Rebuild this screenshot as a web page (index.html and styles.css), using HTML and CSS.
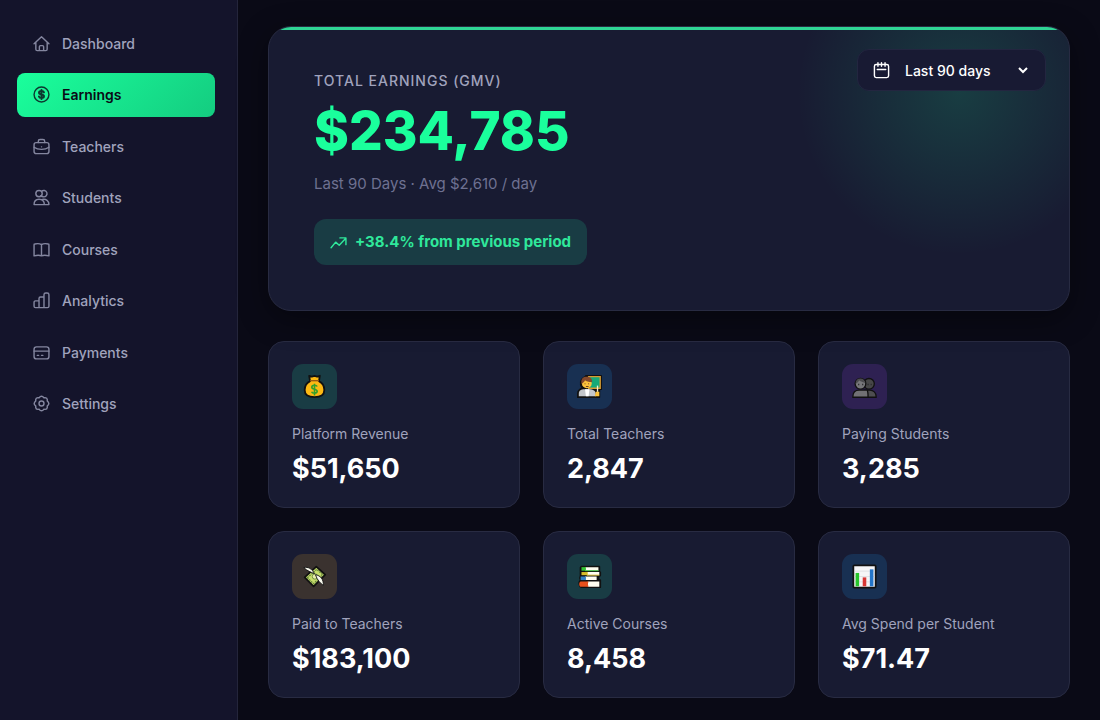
FILE: index.html
```html
<!DOCTYPE html>
<html lang="en">
<head>
    <meta charset="UTF-8">
    <meta name="viewport" content="width=device-width, initial-scale=1.0">
    <title>Earnings</title>
    <link rel="stylesheet" href="styles.css">
</head>
<body>
    <div class="layout">
        <!-- Sidebar -->
        <aside class="sidebar">
            <nav class="nav">
                <a href="#" class="nav-item">
                    <svg class="icon" viewBox="0 0 24 24"><path d="M1.500 12.500 12 2.500l10.500 10M4 10.500V20a2 2 0 0 0 2 2h12a2 2 0 0 0 2-2v-9.500M9 22v-5.500a1.500 1.500 0 0 1 1.500-1.500h3a1.500 1.500 0 0 1 1.500 1.500V22"/></svg>
                    Dashboard
                </a>
                <a href="#" class="nav-item active">
                    <svg class="icon" viewBox="0 0 24 24"><circle cx="12" cy="12" r="10.500"/><path stroke-width="2.800" d="M15.500 9c-.4-1.300-1.800-2-3.500-2-2 0-3.500.9-3.500 2.500 0 3.600 7 1.500 7 5 0 1.600-1.500 2.500-3.500 2.500-1.800 0-3.200-.8-3.600-2.200M12 5.500v13"/></svg>
                    Earnings
                </a>
                <a href="#" class="nav-item">
                    <svg class="icon" viewBox="0 0 24 24"><rect x="1.500" y="6.500" width="21" height="15.500" rx="3"/><path d="M7.500 6.500V4.500a2.500 2.500 0 0 1 2.500-2.500h4a2.500 2.500 0 0 1 2.500 2.500v2M1.500 13c3 2.200 6.500 3 10.500 3s7.500-.8 10.500-3M12 12.500h.1"/></svg>
                    Teachers
                </a>
                <a href="#" class="nav-item">
                    <svg class="icon" viewBox="0 0 24 24"><circle cx="8.500" cy="6.500" r="4.500"/><path d="M12 3.500a4.500 4.500 0 1 1 2.500 7.500c-1.500 0-2.700-.5-3.500-1.500M1.500 22c0-5 2.500-7.500 7-7.500s7.500 2.500 7.500 7.500zM13 14.800c5.500-1 9.500 1.700 9.500 7.200H16"/></svg>
                    Students
                </a>
                <a href="#" class="nav-item">
                    <svg class="icon" viewBox="0 0 24 24"><path d="M12 5C9.500 3.500 5.500 3.500 2.500 4.200a1 1 0 0 0-1 1V21c4-1 8-1 10.500 0 2.500-1 6.500-1 10.500 0V5.200a1 1 0 0 0-1-1C18.500 3.500 14.500 3.500 12 5zM12 5v16"/></svg>
                    Courses
                </a>
                <a href="#" class="nav-item">
                    <svg class="icon" viewBox="0 0 24 24"><path d="M8.500 22H3.500a2 2 0 0 1-2-2v-5.500a2 2 0 0 1 2-2h5zM8.500 22V9a2 2 0 0 1 2-2h5v15zM15.500 22V4a2.500 2.500 0 0 1 2.500-2.500h2A2.500 2.500 0 0 1 22.500 4V20a2 2 0 0 1-2 2z"/></svg>
                    Analytics
                </a>
                <a href="#" class="nav-item">
                    <svg class="icon" viewBox="0 0 24 24"><rect x="1.500" y="4" width="21" height="17" rx="3.500"/><path d="M1.500 10h21M6 16h2M12 16h2"/></svg>
                    Payments
                </a>
                <a href="#" class="nav-item">
                    <svg class="icon" viewBox="0 0 24 24"><circle cx="12" cy="12" r="3.500"/><path d="M10 2.500q2-1.600 4 0l1.300 1.300 2-.1q2.600.2 2.900 2.900l-.1 1.900L21.500 10q1.600 2 0 4l-1.400 1.500.1 1.900q-.3 2.700-2.900 2.900l-2-.1L14 21.500q-2 1.600-4 0l-1.300-1.300-2 .1q-2.600-.2-2.900-2.900l.1-1.900L2.500 14q-1.600-2 0-4l1.400-1.500-.1-1.900q.3-2.700 2.900-2.900l2 .1z"/></svg>
                    Settings
                </a>
            </nav>
        </aside>

        <!-- Main content -->
        <main class="main">
            <section class="hero">
                <div class="hero-info">
                    <h1 class="hero-title">Total Earnings (GMV)</h1>
                    <div class="hero-amount">$234,785</div>
                    <p class="hero-sub">Last 90 Days · Avg $2,610 / day</p>
                    <div class="trend">
                        <svg class="trend-icon" viewBox="0 0 24 24"><path d="M1.500 19.500 8 11.500l5 4.500 9-9.500M14 5.500H22.500V15"/></svg>
                        +38.4% from previous period
                    </div>
                </div>
                <div class="period">
                    <label for="period" class="period-label" aria-label="Period">
                        <svg class="icon" viewBox="0 0 24 24"><rect x="2" y="3.500" width="20" height="18.500" rx="2.500"/><path d="M7 1v5M17 1v5M12 1v5M6 10.500h12"/></svg>
                    </label>
                    <select id="period" class="period-select">
                        <option>Last 90 days</option>
                        <option>Last 30 days</option>
                        <option>Last 7 days</option>
                    </select>
                    <svg class="chevron" viewBox="0 0 12 12"><path d="M2 4l4 4 4-4"/></svg>
                </div>
            </section>

            <section class="stats">
                <article class="card">
                    <div class="card-icon green">
                        <svg class="emoji" viewBox="0 0 28 28">
                            <path d="M8 2l3 1 3-1 3 1 3-1-1 6c4 2 6 5 6 10 0 6-4 8-11 8S3 24 3 18c0-5 2-8 6-10z" fill="#fdb913" stroke="#111" stroke-width="2" stroke-linejoin="round"/>
                            <path d="M9 7.500h10" stroke="#9a5a10" stroke-width="1.500"/>
                            <path d="M17 14c-1-2-6-2-6 .7 0 3 6 1.600 6 4.600 0 2.700-5.500 2.700-6.200.5M14 11v13" fill="none" stroke="#33a02c" stroke-width="1.800"/>
                        </svg>
                    </div>
                    <h2 class="card-label">Platform Revenue</h2>
                    <p class="card-value">$51,650</p>
                </article>
                <article class="card">
                    <div class="card-icon blue">
                        <svg class="emoji" viewBox="0 0 28 28">
                            <path d="M10 2h17v15h-2v9H1v-4c0-3 2-5 5-6-3-4-3-10 4-13z" fill="#111" stroke="#111" stroke-width="2" stroke-linejoin="round"/>
                            <path d="M13 3h13v13H13z" fill="#16a978" stroke="#d89b32" stroke-width="1.500"/>
                            <path d="M2 25v-3c0-4 3-5 6-5h6c4 0 7 2 7 5v3z" fill="#c3c6ca"/>
                            <path d="M9 17h5l-1 8h-3z" fill="#fff"/>
                            <circle cx="11" cy="10.500" r="5.500" fill="#fcc23b"/>
                            <path d="M5 11c-1-6 2-8 6-8 5 0 6 3 6 6-4 0-7-1-8-2-1 2-2 3-4 4z" fill="#84492b"/>
                            <path d="M9 10.500v1M13 10.500v1M10 14h3" stroke="#5d371e" stroke-width="1"/>
                            <path d="M23 13v7" stroke="#f5efcf" stroke-width="1.500"/>
                            <path d="M21 20h4v5h-5z" fill="#fcc23b"/>
                        </svg>
                    </div>
                    <h2 class="card-label">Total Teachers</h2>
                    <p class="card-value">2,847</p>
                </article>
                <article class="card">
                    <div class="card-icon purple">
                        <svg class="emoji" viewBox="0 0 28 28" stroke="#111" stroke-width="1.500">
                            <circle cx="19" cy="11" r="6" fill="#474748"/>
                            <path d="M14 26v-8h6c4 0 7 3 7 7v1z" fill="#4e4e50"/>
                            <path d="M1 26v-1c0-5 3-7 7-7h9c1 2 1 5 1 8z" fill="#717174"/>
                            <circle cx="9.500" cy="11" r="6" fill="#77777a"/>
                            <path d="M7.500 11v1.500M12 11v1.500M18 11v1.500M21.500 11v1.500" stroke="#29292c" stroke-width="1.300"/>
                            <path d="M4 11c0-4 2-6 5.500-6 3 0 5 2 5.500 5-4-1-6-2-7-3-1 2-2 3-4 4z" fill="#4b4b4e" stroke="none"/>
                        </svg>
                    </div>
                    <h2 class="card-label">Paying Students</h2>
                    <p class="card-value">3,285</p>
                </article>
                <article class="card">
                    <div class="card-icon orange">
                        <svg class="emoji" viewBox="0 0 28 28">
                            <path d="M3 15 16 3l10 9-13 13z" fill="#c7dd6b" stroke="#111" stroke-width="2" stroke-linejoin="round"/>
                            <path d="M6 15.500 16.500 6l6.500 6-10 10z" fill="none" stroke="#62833c" stroke-width="1.300" stroke-dasharray="2 1"/>
                            <circle cx="14.500" cy="14" r="3" fill="#e9efaa" stroke="#62833c"/>
                            <path d="M2 4c5-1 9 1 12 7-4-2-8-3-12-7zM15 12c6 1 9 5 9 12-3-2-7-6-9-12z" fill="#f8f8ed" stroke="#111" stroke-width="1"/>
                        </svg>
                    </div>
                    <h2 class="card-label">Paid to Teachers</h2>
                    <p class="card-value">$183,100</p>
                </article>
                <article class="card">
                    <div class="card-icon green">
                        <svg class="emoji" viewBox="0 0 28 28">
                            <path d="M5 3h20v6h1v4h-2v5h2v8H5c-3-1-3-6-1-8-1-2-1-3 0-5V4z" fill="#111" stroke="#111" stroke-width="2" stroke-linejoin="round"/>
                            <path d="M9 3.500h15v4H9zM11 9h14v3.500H11zM9 14h13v4H9zM12 19.500h13v6H12z" fill="#fffdf0"/>
                            <path d="M5 3.500h5v4H5z" fill="#35c235"/>
                            <path d="M5 9h7v3.500H5z" fill="#d9bd2b"/>
                            <path d="M4 14h6v4H4z" fill="#3481c4"/>
                            <path d="M4 19.500h9l-1 3 1 3H4c-2-1-2-5 0-6z" fill="#e8501c"/>
                            <path d="M9 7.500h15" stroke="#35c235"/>
                            <path d="M11 12.500h14" stroke="#d9bd2b"/>
                        </svg>
                    </div>
                    <h2 class="card-label">Active Courses</h2>
                    <p class="card-value">8,458</p>
                </article>
                <article class="card">
                    <div class="card-icon blue">
                        <svg class="emoji" viewBox="0 0 28 28">
                            <rect x="1.500" y="1.500" width="25" height="25" rx="1" fill="#f5f5f7" stroke="#111" stroke-width="2"/>
                            <path d="M3 8h22M3 14h22M3 20h22" stroke="#dedee2"/>
                            <path d="M4 10h4v15H4z" fill="#27c52c"/>
                            <path d="M12 15h4v10h-4z" fill="#d63635"/>
                            <path d="M20 6h4v19h-4z" fill="#2375c8"/>
                        </svg>
                    </div>
                    <h2 class="card-label">Avg Spend per Student</h2>
                    <p class="card-value">$71.47</p>
                </article>
            </section>
        </main>
    </div>
</body>
</html>
```
FILE: styles.css
```css
* {
  box-sizing: border-box;
  margin: 0;
  padding: 0;
}

body {
  background: #0a0a16;
  color: #fff;
  font-family: Inter, "Liberation Sans", sans-serif;
}

.layout {
  display: flex;
  min-height: 100vh;
}

/* Sidebar */
.sidebar {
  flex: 0 0 238px;
  padding: 21px 22px 21px 17px;
  background: #14142b;
  border-right: 1px solid #24253b;
}

.nav {
  display: flex;
  flex-direction: column;
  justify-content: space-between;
  min-height: 405px;
}

.nav-item {
  display: flex;
  align-items: center;
  gap: 12px;
  height: 44px;
  padding: 0 16px;
  border-radius: 8px;
  color: #a0a3bd;
  font-size: 14px;
  font-weight: 500;
  text-decoration: none;
}

.nav-item.active {
  background: linear-gradient(135deg, #1aff9c, #14cc80);
  color: #0a0a16;
  font-weight: 600;
}

.icon {
  flex: none;
  width: 17px;
  height: 17px;
  fill: none;
  stroke: currentColor;
  stroke-width: 2;
  stroke-linecap: round;
  stroke-linejoin: round;
}

.nav-item .icon {
  opacity: 0.8;
}

/* Main content */
.main {
  flex: 1;
  min-width: 0;
  padding: 26px 30px 23px;
}

.hero {
  position: relative;
  display: flex;
  justify-content: space-between;
  align-items: flex-start;
  margin-bottom: 30px;
  padding: 22px 23px 45px 45px;
  overflow: hidden;
  border: 1px solid #282b42;
  border-radius: 23px;
  background: radial-gradient(circle at calc(100% - 110px) 66px, rgba(26, 255, 156, 0.15), rgba(26, 255, 156, 0) 162px), #181b32;
  box-shadow: 0 8px 30px rgba(0, 0, 0, 0.4);
}

/* Green line along the top edge */
.hero::before {
  content: "";
  position: absolute;
  top: -1px;
  left: 0;
  right: 0;
  height: 4px;
  background: #2fd494;
}

.hero-info {
  padding-top: 22px;
}

.hero-title {
  color: #a0a3bd;
  font-size: 14px;
  font-weight: 500;
  line-height: 20px;
  letter-spacing: 1px;
  text-transform: uppercase;
}

.hero-amount {
  margin-top: 8px;
  color: #1aff9c;
  font-size: 53px;
  font-weight: 800;
  line-height: 64px;
}

.hero-sub {
  margin-top: 10px;
  color: #6e7191;
  font-size: 15px;
  line-height: 22px;
}

.trend {
  display: inline-flex;
  align-items: center;
  gap: 8px;
  margin-top: 24px;
  padding: 12px 16px;
  border-radius: 12px;
  background: #193c44;
  color: #2fe89b;
  font-size: 15px;
  font-weight: 700;
  line-height: 22px;
}

.trend-icon {
  width: 17px;
  height: 17px;
  fill: none;
  stroke: currentColor;
  stroke-width: 2;
  stroke-linecap: round;
  stroke-linejoin: round;
}

.period {
  display: flex;
  align-items: center;
  height: 42px;
  padding: 0 16px 0 15px;
  border: 1px solid #232640;
  border-radius: 12px;
  background: #181a33;
}

.period-label {
  display: flex;
}

.period-select {
  appearance: none;
  width: 139px;
  height: 40px;
  margin-right: -12px;
  padding-left: 15px;
  border: none;
  background: transparent;
  color: #fff;
  font-family: inherit;
  font-size: 14px;
  font-weight: 500;
}

.period-select option {
  background: #181a33;
}

.chevron {
  width: 12px;
  height: 12px;
  fill: none;
  stroke: #fff;
  stroke-width: 2;
  pointer-events: none;
}

/* Stat cards */
.stats {
  display: grid;
  grid-template-columns: repeat(3, 1fr);
  gap: 23px;
}

.card {
  padding: 22px 23px;
  border: 1px solid #282b42;
  border-radius: 16px;
  background: #181b32;
}

.card-icon {
  display: flex;
  align-items: center;
  justify-content: center;
  width: 45px;
  height: 45px;
  margin-bottom: 16px;
  border-radius: 11px;
}

.green {
  background: #193c44;
}

.blue {
  background: #183052;
}

.purple {
  background: #2e2152;
}

.orange {
  background: #3a322f;
}

.emoji {
  width: 25px;
  height: 25px;
}

.card-label {
  color: #a0a3bd;
  font-size: 14px;
  font-weight: 400;
  line-height: 18px;
}

.card-value {
  margin-top: 10px;
  font-size: 27px;
  font-weight: 700;
  line-height: 32px;
}
```
